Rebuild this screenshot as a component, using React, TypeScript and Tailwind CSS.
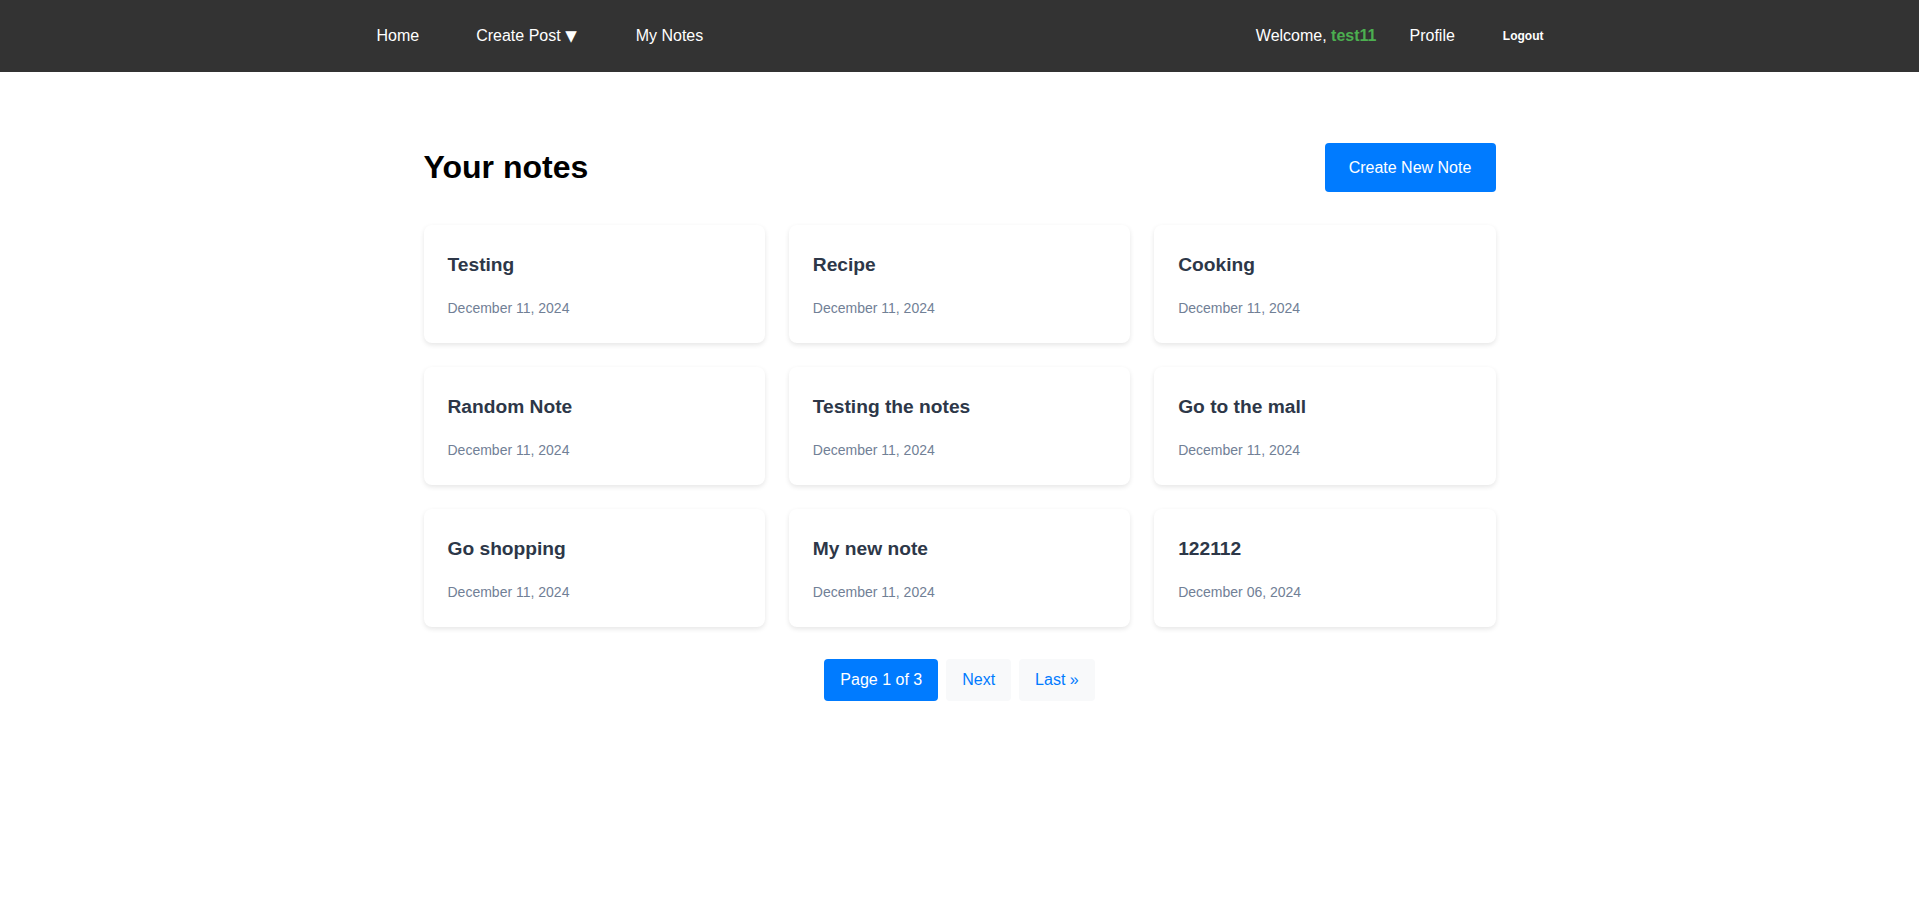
import React from 'react';

const notes = [
  { title: 'Testing', date: 'December 11, 2024' },
  { title: 'Recipe', date: 'December 11, 2024' },
  { title: 'Cooking', date: 'December 11, 2024' },
  { title: 'Random Note', date: 'December 11, 2024' },
  { title: 'Testing the notes', date: 'December 11, 2024' },
  { title: 'Go to the mall', date: 'December 11, 2024' },
  { title: 'Go shopping', date: 'December 11, 2024' },
  { title: 'My new note', date: 'December 11, 2024' },
  { title: '122112', date: 'December 06, 2024' },
];

export default function App() {
  return (
    <div className="min-h-[911px] bg-white font-['Liberation_Sans',Arial,sans-serif]">
      <nav className="bg-[#333333] h-[72px]">
        <div className="w-[1200px] mx-auto h-full flex items-center justify-between text-white text-[16px]">
          <div className="flex items-center">
            <a className="ml-[17px]">Home</a>
            <a className="ml-[57px]">
              Create Post <span className="font-['DejaVu_Sans',sans-serif] text-[15px]">▼</span>
            </a>
            <a className="ml-[59px]">My Notes</a>
          </div>
          <div className="flex items-center pr-[16px]">
            <span>
              Welcome, <span className="font-bold text-[#4caf50]">test11</span>
            </span>
            <a className="ml-[33px]">Profile</a>
            <button className="ml-[48px] text-[12px] font-bold">Logout</button>
          </div>
        </div>
      </nav>

      <main className="w-[1072px] mx-auto pt-[71px]">
        <div className="flex items-center justify-between h-[49px] mb-[33px]">
          <h1 className="text-[32px] font-bold text-black mb-[2px]">Your notes</h1>
          <button className="h-[49px] w-[171px] rounded bg-[#007bff] text-white text-[16px]">
            Create New Note
          </button>
        </div>

        <div className="grid grid-cols-3 gap-6">
          {notes.map((n) => (
            <div
              key={n.title}
              className="bg-white rounded-lg shadow-[0_2px_5px_rgba(0,0,0,0.1)] p-6 h-[118px]"
            >
              <h3 className="pt-[2px] text-[19.2px] leading-[1.5] font-bold text-[#2d3748]">{n.title}</h3>
              <p className="mt-[18px] text-[14px] leading-[1.5] text-[#718096]">{n.date}</p>
            </div>
          ))}
        </div>

        <div className="flex justify-center gap-2 mt-8 text-[16px] leading-[18px]">
          <span className="px-4 py-3 rounded bg-[#007bff] text-white">Page 1 of 3</span>
          <a className="px-4 py-3 rounded bg-[#f8f9fa] text-[#007bff]">Next</a>
          <a className="px-4 py-3 rounded bg-[#f8f9fa] text-[#007bff]">Last »</a>
        </div>
      </main>
    </div>
  );
}
